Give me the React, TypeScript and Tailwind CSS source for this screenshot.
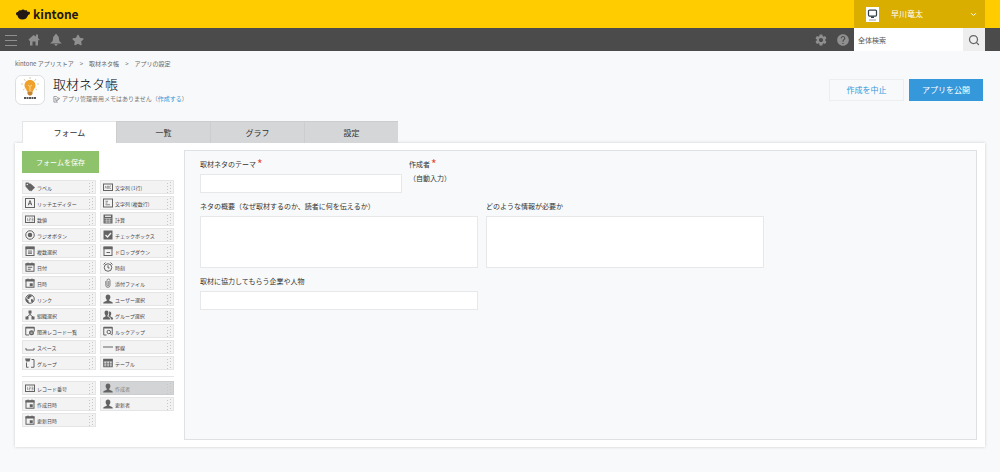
import type { ReactNode } from 'react';
import { MdSettings, MdHelp } from 'react-icons/md';
import { FaStar } from 'react-icons/fa';
import { ChevronDown, Search } from 'lucide-react';

type IconName =
  | 'label' | 'rich' | 'number' | 'radio' | 'multi' | 'date' | 'datetime' | 'link'
  | 'org' | 'related' | 'space' | 'group' | 'text' | 'textarea' | 'calc' | 'check'
  | 'dropdown' | 'time' | 'file' | 'user' | 'users' | 'lookup' | 'line' | 'table';

interface FieldPart {
  icon: IconName;
  label: string;
  disabled?: boolean;
}

const fieldParts: FieldPart[] = [
  { icon: 'label', label: 'ラベル' },
  { icon: 'text', label: '文字列 (1行)' },
  { icon: 'rich', label: 'リッチエディター' },
  { icon: 'textarea', label: '文字列 (複数行)' },
  { icon: 'number', label: '数値' },
  { icon: 'calc', label: '計算' },
  { icon: 'radio', label: 'ラジオボタン' },
  { icon: 'check', label: 'チェックボックス' },
  { icon: 'multi', label: '複数選択' },
  { icon: 'dropdown', label: 'ドロップダウン' },
  { icon: 'date', label: '日付' },
  { icon: 'time', label: '時刻' },
  { icon: 'datetime', label: '日時' },
  { icon: 'file', label: '添付ファイル' },
  { icon: 'link', label: 'リンク' },
  { icon: 'user', label: 'ユーザー選択' },
  { icon: 'org', label: '組織選択' },
  { icon: 'users', label: 'グループ選択' },
  { icon: 'related', label: '関連レコード一覧' },
  { icon: 'lookup', label: 'ルックアップ' },
  { icon: 'space', label: 'スペース' },
  { icon: 'line', label: '罫線' },
  { icon: 'group', label: 'グループ' },
  { icon: 'table', label: 'テーブル' },
];

const systemParts: FieldPart[] = [
  { icon: 'number', label: 'レコード番号' },
  { icon: 'user', label: '作成者', disabled: true },
  { icon: 'datetime', label: '作成日時' },
  { icon: 'user', label: '更新者' },
  { icon: 'datetime', label: '更新日時' },
];

const tabs = ['フォーム', '一覧', 'グラフ', '設定'];

// All palette icons share a 20x20 grid
const iconShapes: Record<IconName, ReactNode> = {
  label: (
    <path
      fill="currentColor"
      stroke="none"
      fillRule="evenodd"
      d="M1 2v7l8 9 2-1 1 2 8-8-9-8H8L7 1H2zM4.500 3.500a1.500 1.500 0 1 1 0 3 1.500 1.500 0 0 1 0-3z"
    />
  ),
  rich: (
    <>
      <rect x="1" y="1" width="18" height="18" />
      <path d="M6.500 14.500 10 5l3.500 9.500M7.500 11.500h5" strokeWidth="2" />
    </>
  ),
  number: (
    <>
      <rect x="1" y="4" width="18" height="13" />
      <path d="M5 8v6M8 8h2.500v3H8v3h2.500M13 8h3v6h-3M13 11h3" strokeWidth="1" />
    </>
  ),
  text: (
    <>
      <rect x="1" y="4" width="18" height="13" />
      <path d="M4 13l1.500-5L7 13M9 8v5h2V8zM13.500 8H16M13.500 13H16M13.500 8v5" strokeWidth="1" />
    </>
  ),
  textarea: (
    <>
      <rect x="1" y="2" width="18" height="16" />
      <path d="M5 6.500h5M5 10h4M5 13.500h9" strokeWidth="1.500" />
    </>
  ),
  calc: (
    <>
      <path fill="currentColor" stroke="none" d="M1 1h18v18H1z" />
      <path d="M4 4.500h12" stroke="#f3f3f4" strokeWidth="2.500" />
      <path d="M3 9h14M3 12.500h14M3 16h14M7.500 9v9M12.500 9v9" stroke="#f3f3f4" strokeWidth="1" />
    </>
  ),
  radio: (
    <>
      <circle cx="10" cy="10" r="8.500" />
      <circle cx="10" cy="10" r="4.500" fill="currentColor" stroke="none" />
    </>
  ),
  check: (
    <>
      <rect x="1" y="1" width="18" height="18" fill="currentColor" stroke="none" />
      <path d="m5 10 4 4 7-8" stroke="#f3f3f4" strokeWidth="2.500" />
    </>
  ),
  multi: (
    <>
      <rect x="2" y="2" width="16" height="17" />
      <path d="M1 4h18" strokeWidth="5" />
      <path d="M6 10h8M6 12.500h8M6 15h8" strokeWidth="1.500" />
    </>
  ),
  dropdown: (
    <>
      <rect x="2" y="2" width="16" height="17" />
      <path d="M1 4h18" strokeWidth="5" />
      <path d="M7 13h7" />
    </>
  ),
  date: (
    <>
      <rect x="2" y="3.500" width="16" height="15" />
      <path d="M1 5h18" strokeWidth="4" />
      <path d="M6 1v4M14 1v4M5.500 10.500h9M5.500 14.500h6" />
    </>
  ),
  datetime: (
    <>
      <rect x="2" y="3.500" width="16" height="15" />
      <path d="M1 5h18" strokeWidth="4" />
      <path d="M6 1v4M14 1v4" />
      <rect x="9.500" y="10.500" width="6" height="6" fill="currentColor" stroke="none" />
    </>
  ),
  time: (
    <>
      <circle cx="10" cy="11" r="7.500" />
      <path d="M10 6.500V12h3M1 5l4-4M19 5l-4-4" />
    </>
  ),
  file: (
    <path
      d="M5.500 6v8.500a4 4 0 0 0 8.500 0V5a3 3 0 0 0-6 0v9a1.500 1.500 0 0 0 3.500 0V6"
      strokeWidth="1.500"
    />
  ),
  link: (
    <>
      <circle cx="10" cy="10" r="8.500" />
      <path
        fill="currentColor"
        stroke="none"
        d="M2 8.500 7 13v2l2 4C4 18.500 1 14 2 8.500zM8 2l6 .5-1.500 3.500-3 1-1 3H6L4 8l2-4zM12 10l4 1 1 3-3 3.500-2-3z"
      />
    </>
  ),
  user: (
    <path
      fill="currentColor"
      stroke="none"
      d="M10 1c3 0 4.700 2 4.700 5 0 2.500-1 4.500-2.200 5.500v2l5.700 2.500c1 .5 1.300 1.500 1.300 3H.5c0-1.500.3-2.500 1.300-3l5.700-2.500v-2C6.300 10.500 5.300 8.500 5.300 6c0-3 1.700-5 4.700-5z"
    />
  ),
  users: (
    <path
      fill="currentColor"
      stroke="none"
      d="M7 1c2.500 0 3.900 1.800 3.900 4.500 0 2.200-.9 4-1.900 5V13l4 2c.8.500 1 2 1 4H0c0-2 .2-3.500 1-4l4-2v-2.500c-1-1-1.900-2.800-1.900-5C3.100 2.800 4.500 1 7 1zM12 3c3 0 4.500 1 4.500 4 0 1.800-.6 3-1.500 4v2l4 2c1 .5 1 2 1 4h-4.500c0-2.500-.5-4-2-4.800L11 12.500V11.500c1-1.500 1.500-3.500 1-8.500z"
    />
  ),
  org: (
    <>
      <path d="M10 5v5M10 9l-6 5M10 9l6 5" />
      <path fill="currentColor" stroke="none" d="M7 1h6v6H7zM1 13h6v6H1zM13 13h6v6h-6z" />
    </>
  ),
  related: (
    <>
      <path d="M8 18H1.500V2.500h17V11" />
      <path d="M1.500 3.500h17" strokeWidth="3" />
      <circle cx="13" cy="13.500" r="5" fill="currentColor" stroke="none" />
      <path d="M10.500 12.500h5M11 15h4" stroke="#f3f3f4" strokeWidth="1" />
    </>
  ),
  lookup: (
    <>
      <path d="M7 18H1.500V2.500h17V17" />
      <path d="M1.500 3.500h17" strokeWidth="3" />
      <circle cx="11.500" cy="12" r="3.500" />
      <path d="m14 14.500 4 4" />
    </>
  ),
  space: <path d="M2 12v4h16v-4" />,
  line: <path d="M0 10h20" />,
  group: (
    <>
      <path d="M3 9v9.500h4M12 18.500h6V3h-5" />
      <path fill="currentColor" stroke="none" d="M0 1h11L9 7H2z" />
    </>
  ),
  table: (
    <>
      <rect x="1.500" y="2.500" width="17" height="15" />
      <path d="M1 4.500h18" strokeWidth="5" />
      <path d="M1 10.500h18M1 14h18M7.500 7v11M13 7v11" strokeWidth="1.500" />
    </>
  ),
};

function PartIcon({ name }: { name: IconName }) {
  return (
    <svg
      viewBox="0 0 20 20"
      className="h-[10px] w-[10px] shrink-0 text-[#636363]"
      fill="none"
      stroke="currentColor"
      strokeWidth="2"
      aria-hidden="true"
    >
      {iconShapes[name]}
    </svg>
  );
}

function PartButton({ icon, label, disabled = false }: FieldPart) {
  return (
    <button
      type="button"
      disabled={disabled}
      className={`flex h-[14px] items-center gap-[2px] border pl-[2px] pr-px text-[5px] leading-none ${
        disabled
          ? 'border-[#cbcccd] bg-[#d3d4d5] text-[#808080]'
          : 'border-[#e4e5e6] bg-[#f3f3f4] text-[#444]'
      }`}
    >
      <PartIcon name={icon} />
      <span className="flex-1 whitespace-nowrap text-left">{label}</span>
      {/* Drag handle */}
      <svg viewBox="0 0 5 11" className="h-[11px] w-[5px] shrink-0 text-[#c6c7c8]" aria-hidden="true">
        <path d="M.5 1v10M3.500 0v10" stroke="currentColor" strokeWidth="1" strokeDasharray="1 2" fill="none" />
      </svg>
    </button>
  );
}

function Logo() {
  return (
    <a href="#" className="flex items-center gap-[3px] text-[#231815]">
      <svg viewBox="0 0 28 22" className="h-[11px] w-[14px]" fill="currentColor" aria-hidden="true">
        <path d="M0 9c0-2 2-3 4-3 1-3 4-4 6-3 2-3 6-3 8 0 3-1 5 0 5 3 3-1 5 0 5 2s-2 4-4 4c0 2-1 3-2 4 0 3-4 5-9 5-6 0-9-3-10-8-2 0-3-2-3-4z" />
      </svg>
      <span className="text-[12px] font-bold leading-none">kintone</span>
    </a>
  );
}

function Header() {
  return (
    <header>
      <div className="flex h-7 items-stretch justify-between bg-[#ffcc00] pl-4 pr-[15px]">
        <Logo />
        <button
          type="button"
          className="flex w-[131px] items-center bg-[#d9ae00] pl-3 pr-[7px] text-[8px] text-white"
        >
          <svg viewBox="0 0 26 30" className="h-[15px] w-[13px]" aria-hidden="true">
            <rect width="26" height="30" fill="#fff" />
            <rect x="5" y="6" width="16" height="12" rx="2" fill="none" stroke="#35424b" strokeWidth="2.500" />
            <path d="M10 19h6v3h-6z" fill="#35424b" />
            <path d="M6 26h14" stroke="#9aa3a8" strokeWidth="2" />
          </svg>
          <span className="ml-3 flex-1 text-left">早川竜太</span>
          <ChevronDown className="h-[9px] w-[9px]" strokeWidth={2.5} />
        </button>
      </div>
      <div className="flex h-[23px] items-stretch justify-between bg-[#4b4b4b] pl-[5px] pr-[15px] text-[#8f8f8f]">
        <nav className="flex items-center gap-[10px]">
          <button type="button" aria-label="メニュー">
            <svg viewBox="0 0 13 12" className="h-3 w-[13px]" stroke="currentColor" strokeWidth="1" aria-hidden="true">
              <path d="M0 1.500h12M0 6.500h12M0 11.500h12" />
            </svg>
          </button>
          <a href="#" aria-label="ホーム">
            <svg viewBox="0 0 24 24" className="h-3 w-3" fill="currentColor" aria-hidden="true">
              <path d="M11 2 1 11l2 3 1-1v10h5v-8h6v8h5V12l2 1 1-2-3-3V1h-4v4z" />
            </svg>
          </a>
          <button type="button" aria-label="通知">
            <svg viewBox="0 0 24 24" className="h-3 w-3" fill="currentColor" aria-hidden="true">
              <path d="M12 0c1.500 0 2 1 2 2.500 3 1 4 4 4 7.500 0 4 2 6 5 8v1H1v-1c3-2 5-4 5-8 0-3.500 1-6.500 4-7.500C10 1 10.500 0 12 0zM9 20h6c0 2-1 3.500-3 3.500S9 22 9 20z" />
            </svg>
          </button>
          <button type="button" aria-label="お気に入り">
            <FaStar className="h-3 w-3" />
          </button>
        </nav>
        <div className="flex items-center">
          <button type="button" aria-label="設定" className="mr-2">
            <MdSettings className="h-[14px] w-[14px]" />
          </button>
          <button type="button" aria-label="ヘルプ" className="mr-1">
            <MdHelp className="h-[14px] w-[14px]" />
          </button>
          <input
            type="search"
            aria-label="全体検索"
            placeholder="全体検索"
            className="h-full w-[109px] bg-white px-1 text-[7px] text-[#444] outline-none placeholder:text-[#555]"
          />
          <button
            type="button"
            aria-label="検索"
            className="flex h-full w-[22px] items-center justify-center bg-[#eeeeef] text-[#666]"
          >
            <Search className="h-3 w-3" strokeWidth={2.5} />
          </button>
        </div>
      </div>
    </header>
  );
}

function AppIcon() {
  return (
    <svg viewBox="0 0 60 60" className="h-[30px] w-[30px] shrink-0" aria-hidden="true">
      <rect x="1" y="1" width="58" height="58" rx="12" fill="#fff" stroke="#dcdee0" strokeWidth="2" />
      <path
        d="M30 4v4M18 8l3 4M42 8l-3 4M12 18h4M44 18h4M16 30l3-2M44 30l-3-2"
        stroke="#cdb68c"
        strokeWidth="1.500"
      />
      <path d="M30 10c-7 0-11 5-11 11 0 5 4 7 5 12h12c1-5 5-7 5-12 0-6-4-11-11-11z" fill="#f0a12b" />
      <path d="M26 20l4 3 4-3M30 23v10" stroke="#fbd690" strokeWidth="2" fill="none" />
      <path d="M25 33h10v5l-3 3h-4l-3-3z" fill="#c5812c" />
      <path d="M18 46h24" stroke="#555" strokeWidth="4" strokeDasharray="4 1" />
    </svg>
  );
}

interface FieldLabelProps {
  htmlFor: string;
  required?: boolean;
  children: ReactNode;
}

function FieldLabel({ htmlFor, required = false, children }: FieldLabelProps) {
  return (
    <label htmlFor={htmlFor} className="flex h-[10px] items-center gap-px whitespace-nowrap text-[7px]">
      {children}
      {required && <span className="text-[12px] leading-none text-[#e74c3c]">*</span>}
    </label>
  );
}

const fieldBox = 'mt-[5px] block border border-[#e6e8ea] bg-white px-1 text-[7px] outline-none';

function FormCanvas() {
  return (
    <form className="flex min-h-[290px] min-w-0 flex-1 flex-col gap-2 border border-[#dfe2e4] bg-[#f7f9fa] px-[15px] py-2">
      <div className="flex gap-[7px]">
        <div>
          <FieldLabel htmlFor="theme" required>取材ネタのテーマ</FieldLabel>
          <input id="theme" type="text" className={`${fieldBox} h-[19px] w-[202px]`} />
        </div>
        <div>
          <FieldLabel htmlFor="creator" required>作成者</FieldLabel>
          <output id="creator" className="mt-1 block text-[7px] leading-[10px]">（自動入力）</output>
        </div>
      </div>
      <div className="flex gap-2">
        <div>
          <FieldLabel htmlFor="summary">ネタの概要（なぜ取材するのか、読者に何を伝えるか）</FieldLabel>
          <textarea id="summary" className={`${fieldBox} h-[52px] w-[278px] resize-none`} />
        </div>
        <div>
          <FieldLabel htmlFor="info">どのような情報が必要か</FieldLabel>
          <textarea id="info" className={`${fieldBox} h-[52px] w-[278px] resize-none`} />
        </div>
      </div>
      <div>
        <FieldLabel htmlFor="partner">取材に協力してもらう企業や人物</FieldLabel>
        <input id="partner" type="text" className={`${fieldBox} h-[19px] w-[278px]`} />
      </div>
    </form>
  );
}

export default function App() {
  return (
    <div className="min-h-screen bg-[#f7f9fa] font-['Noto_Sans_CJK_JP',sans-serif] text-[#333]">
      <Header />

      <main className="px-[15px] pb-6 pt-2">
        <nav aria-label="パンくず" className="flex gap-[6px] text-[6px] leading-[10px] text-[#666]">
          <a href="#">kintone アプリストア</a>
          <span>&gt;</span>
          <a href="#">取材ネタ帳</a>
          <span>&gt;</span>
          <a href="#">アプリの設定</a>
        </nav>

        <div className="mt-[6px] flex items-center justify-between">
          <div className="flex items-center gap-2">
            <AppIcon />
            <div>
              <h1 className="text-[13px] font-light leading-[18px] text-black">取材ネタ帳</h1>
              <p className="flex items-center text-[6px] leading-[12px] text-[#777]">
                <svg
                  viewBox="0 0 16 16"
                  className="mr-[2px] h-[7px] w-[7px]"
                  fill="none"
                  stroke="currentColor"
                  strokeWidth="1.500"
                  aria-hidden="true"
                >
                  <path d="M11 14H2V1h6l4 4M4 6h4M4 9h3M7 12l1-3 6-5 1 2-6 5z" />
                </svg>
                アプリ管理者用メモはありません（
                <a href="#" className="text-[#3498db]">作成する</a>）
              </p>
            </div>
          </div>
          <div className="mr-[2px] flex gap-[5px] text-[8px]">
            <button type="button" className="h-[22px] w-[75px] border border-[#eceff1] bg-[#f7f9fa] text-[#3498db]">
              作成を中止
            </button>
            <button type="button" className="h-[22px] w-[74px] bg-[#3498db] text-white">
              アプリを公開
            </button>
          </div>
        </div>

        <div role="tablist" className="ml-[7px] mt-4 flex text-[8px]">
          {tabs.map((tab, i) => (
            <button
              key={tab}
              type="button"
              role="tab"
              aria-selected={i === 0}
              className={`h-[22px] w-[94px] border-l border-t ${
                i === 0 ? 'border-[#e3e5e7] bg-white' : 'border-[#cbcdce] bg-[#d4d6d7]'
              }`}
            >
              {tab}
            </button>
          ))}
        </div>

        <section className="flex gap-[10px] bg-white py-[7px] pl-[7px] pr-2 shadow-[0_0_3px_rgba(0,0,0,0.18)]">
          <div className="w-[152px] shrink-0 pt-px">
            <button type="button" className="block h-[22px] w-[77px] bg-[#8fc36b] text-[7px] text-white">
              フォームを保存
            </button>
            <div className="mt-[7px] grid grid-cols-2 gap-x-1 gap-y-[2px] border-b border-[#e3e5e6] pb-[6px]">
              {fieldParts.map((part) => (
                <PartButton key={part.label} {...part} />
              ))}
            </div>
            <div className="mt-1 grid grid-cols-2 gap-x-1 gap-y-[2px]">
              {systemParts.map((part) => (
                <PartButton key={part.label} {...part} />
              ))}
            </div>
          </div>
          <FormCanvas />
        </section>
      </main>
    </div>
  );
}
